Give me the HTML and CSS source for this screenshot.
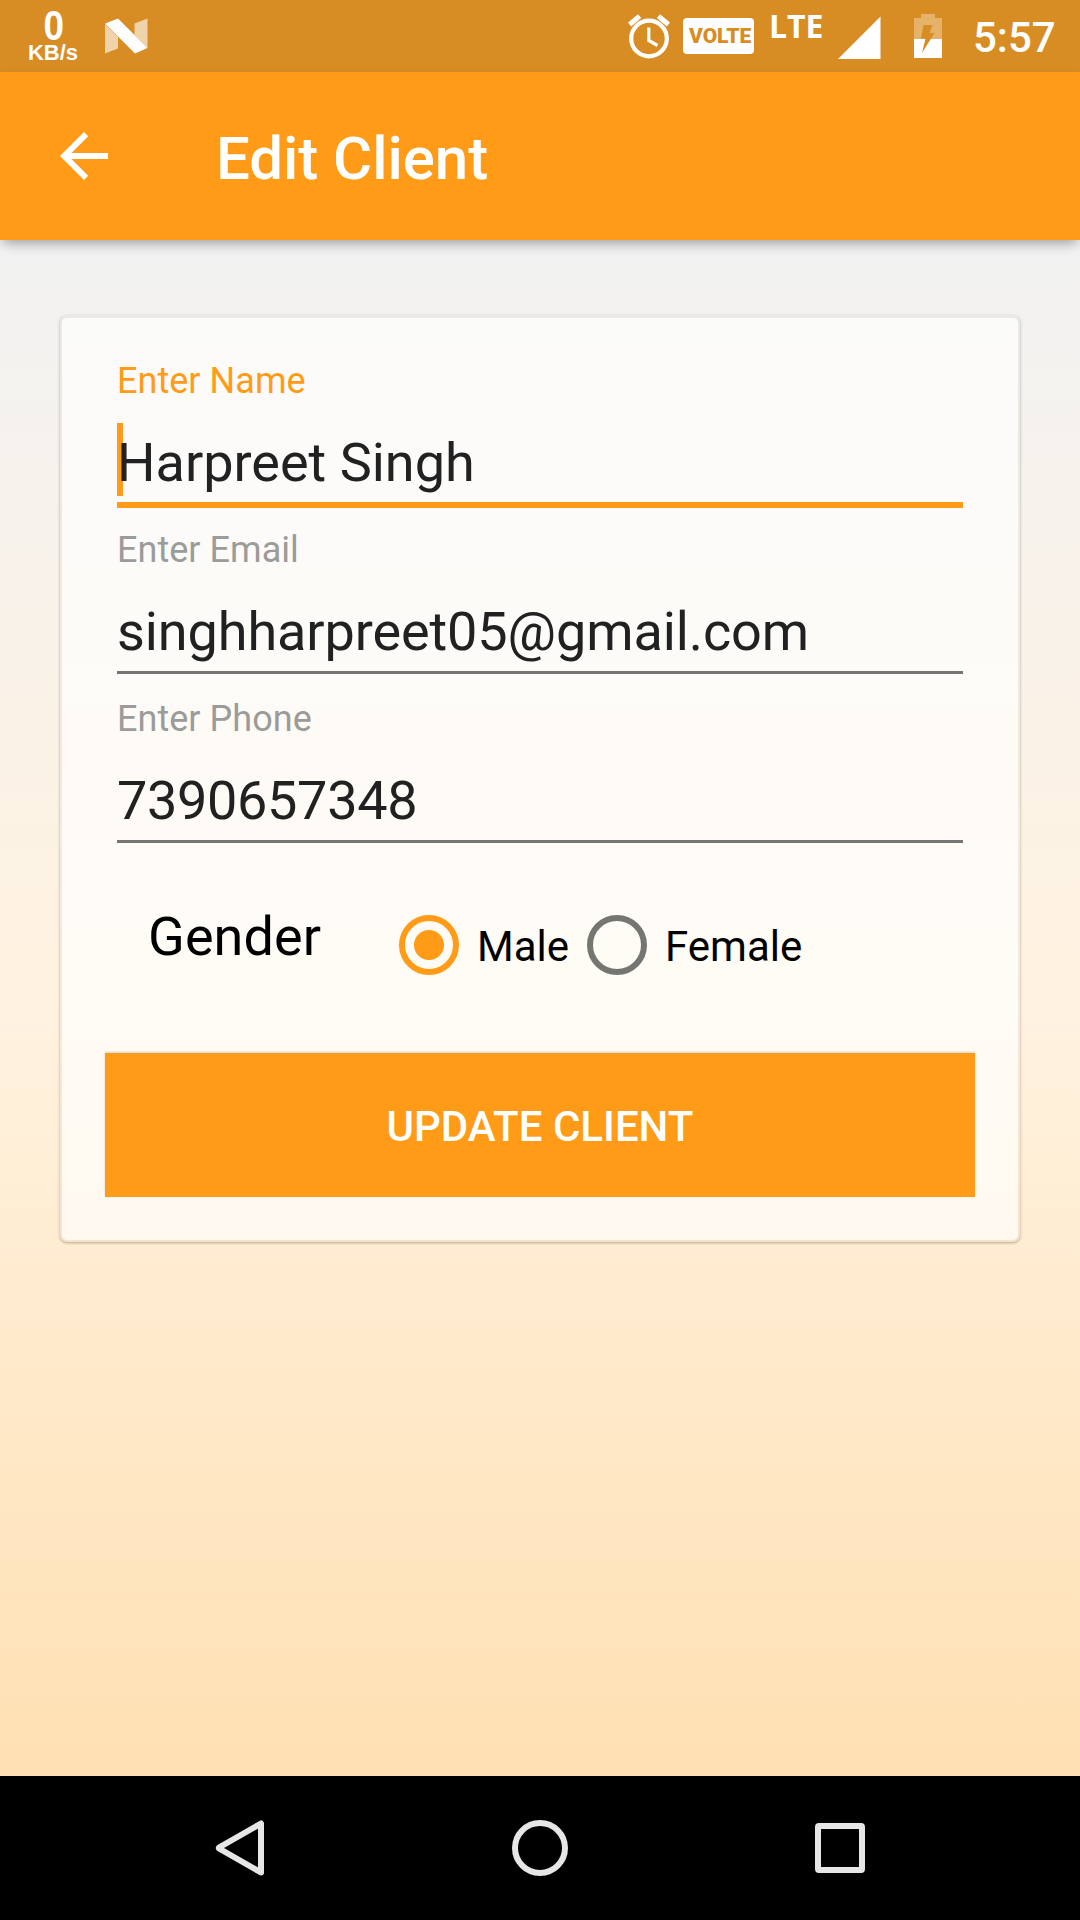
FILE: index.html
```html
<!DOCTYPE html>
<html lang="en">
<head>
<meta charset="utf-8">
<title>Edit Client</title>
<link rel="stylesheet" href="styles.css">
</head>
<body>
<div class="screen">
  <header class="status">
    <div class="speed"><span class="speed-value">0</span><span class="speed-unit">KB/s</span></div>
    <svg class="nougat" width="44" height="36" viewBox="0 0 44 36" fill="#fff">
      <path opacity=".62" d="M0 6 13 19V30.500L0 35.500ZM29.500 5.500 42.500 .500V30L29.500 17Z"/>
      <path d="M0 5.500 13 .500 42.500 30 30 35.500Z"/>
    </svg>
    <div class="status-right">
      <svg class="alarm" width="44" height="46" viewBox="0 0 44 46" fill="none" stroke="#fff">
        <circle cx="21" cy="24.500" r="17.800" stroke-width="4.200"/>
        <path stroke-width="5" d="M1.600 10.500 11.600 2.200M30.400 2.200 40.400 10.500"/>
        <path stroke-width="3.200" d="M20.800 13.500V26.500L29.500 31.500"/>
      </svg>
      <span class="volte">VOLTE</span>
      <span class="lte">LTE</span>
      <svg class="signal" width="43" height="43" viewBox="0 0 43 43"><path fill="#fff" d="M0 43 42.500 .500V43Z"/></svg>
      <svg class="battery" width="28" height="44" viewBox="0 0 28 44">
        <path fill="#e6b168" d="M7 0H21V4H28V25H0V4H7Z"/>
        <path fill="#fff" d="M0 25H28V44H0Z"/>
        <path fill="#d88c24" d="M9.500 11H18.500L15.500 19H20.500L8 39 11.500 24.500H7Z"/>
      </svg>
      <span class="clock">5:57</span>
    </div>
  </header>

  <div class="toolbar">
    <svg width="72" height="72" viewBox="0 0 24 24"><path fill="#fff" d="M20 11H7.830l5.590-5.590L12 4l-8 8 8 8 1.410-1.410L7.830 13H20v-2z"/></svg>
    <h1 class="title">Edit Client</h1>
  </div>

  <main class="content">
    <form class="card">
      <div class="field focused">
        <span class="label">Enter Name</span>
        <div class="value"><i class="caret"></i>Harpreet Singh</div>
      </div>
      <div class="field">
        <span class="label">Enter Email</span>
        <div class="value email">singhharpreet05@gmail.com</div>
      </div>
      <div class="field">
        <span class="label">Enter Phone</span>
        <div class="value phone">7390657348</div>
      </div>
      <div class="gender">
        <span class="gender-label">Gender</span>
        <span class="radio checked"></span><span class="option">Male</span>
        <span class="radio"></span><span class="option">Female</span>
      </div>
      <button class="update" type="button">UPDATE CLIENT</button>
    </form>
  </main>

  <nav class="navbar">
    <svg width="60" height="60" viewBox="0 0 60 60" fill="none" stroke="#e6e6e6" stroke-width="6" stroke-linejoin="round"><path d="M51 5.500V54.500L9 30.500Q8.500 30 9 29.500Z"/></svg>
    <svg width="60" height="60" viewBox="0 0 60 60" fill="none" stroke="#e6e6e6" stroke-width="6"><circle cx="30" cy="30" r="25"/></svg>
    <svg width="60" height="60" viewBox="0 0 60 60" fill="none" stroke="#e6e6e6" stroke-width="6"><rect x="8" y="8" width="44" height="44" rx="1"/></svg>
  </nav>
</div>
</body>
</html>
```
FILE: styles.css
```css
* { box-sizing: border-box; }

body {
  margin: 0;
  font-family: Roboto, "Liberation Sans", sans-serif;
}

svg { display: block; flex: none; }

.screen {
  display: flex;
  flex-direction: column;
  width: 1080px;
  height: 1920px;
  overflow: hidden;
}

.status {
  display: flex;
  align-items: flex-start;
  height: 72px;
  padding-left: 24px;
  background: #d88c24;
  color: #fff;
}

.speed {
  display: flex;
  flex-direction: column;
  align-items: center;
  width: 60px;
  padding-top: 5px;
  font-family: "Liberation Sans", sans-serif;
  font-weight: 700;
}

.speed-value {
  font-size: 42px;
  line-height: 42px;
  transform: scaleX(.88);
}

.speed-unit {
  margin-left: -2px;
  font-size: 22px;
  line-height: 12px;
}

.nougat { margin: 18px 0 0 21px; }

.status-right {
  display: flex;
  align-items: flex-start;
  margin-left: auto;
  padding-right: 25px;
}

.alarm { margin-top: 14px; }

.volte {
  width: 71px;
  height: 36px;
  margin: 18px 0 0 11px;
  padding-left: 6px;
  border-radius: 4px;
  background: #fff;
  color: #d88c24;
  font-size: 21px;
  font-weight: 900;
  line-height: 36px;
  letter-spacing: -.1px;
}

.lte {
  width: 54px;
  margin: 7px 0 0 15px;
  font-family: "Open Sans", sans-serif;
  font-size: 32px;
  font-weight: 700;
  line-height: 37px;
}

.signal { margin: 16px 0 0 15px; }
.battery { margin: 14px 0 0 33px; }

.clock {
  width: 82px;
  margin: 13px 0 0 31px;
  font-size: 42px;
  font-weight: 500;
  line-height: 49px;
}

.toolbar {
  display: flex;
  align-items: center;
  gap: 96px;
  height: 168px;
  padding-left: 48px;
  background: #ff9b17;
  box-shadow: 0 6px 12px -3px rgba(0, 0, 0, .36);
  z-index: 1;
}

.title {
  margin: 0;
  padding-top: 5px;
  color: #fff;
  font-size: 60px;
  font-weight: 500;
  line-height: 72px;
  letter-spacing: -.05px;
}

.content {
  flex: 1;
  padding: 75px 60px 0;
  background: linear-gradient(#f2f2f2, #fff2e0 50%, #ffe0b2);
}

.card {
  display: flex;
  flex-direction: column;
  height: 927px;
  padding: 42px 43px 0;
  border: 2px solid rgba(0, 0, 0, .035);
  border-top-width: 3px;
  border-radius: 7px;
  background: rgba(255, 255, 255, .67);
  background-clip: padding-box;
  box-shadow: 0 1px 3px rgba(0, 0, 0, .3);
}

.field {
  height: 169px;
  margin: 0 12px;
}

.label {
  display: block;
  height: 64px;
  color: #9b9b99;
  font-size: 36px;
  line-height: 42px;
  letter-spacing: .04px;
}

.focused .label { color: #ff9b17; }

.value {
  position: relative;
  height: 81px;
  border-bottom: 3px solid #757573;
  color: #212121;
  font-size: 54px;
  line-height: 77px;
}

.email { letter-spacing: -.1px; }
.phone { letter-spacing: -.33px; }

.focused .value {
  height: 84px;
  border-bottom: 6px solid #ff9b17;
}

.caret {
  position: absolute;
  top: -1px;
  left: 0;
  width: 6px;
  height: 73px;
  background: #ff9b17;
  z-index: -1;
}

.focused .value { z-index: 0; }

.gender {
  display: flex;
  align-items: flex-start;
  height: 186px;
  padding: 48px 0 0 43px;
  color: #000;
}

.gender-label {
  width: 251px;
  margin-top: -10px;
  font-size: 54px;
  line-height: 63px;
  letter-spacing: .1px;
}

.radio {
  flex: none;
  width: 60px;
  height: 60px;
  border: 6px solid #757572;
  border-radius: 50%;
}

.checked {
  border-color: #ff9b17;
  background: radial-gradient(circle, #ff9b17 14.5px, transparent 15.5px);
}

.option {
  width: 111px;
  padding: 7px 0 0 18px;
  margin-right: 17px;
  font-size: 42px;
  line-height: 49px;
}

.update {
  height: 144px;
  margin: 0;
  padding: 2px 0 0;
  border: 0;
  background: #ff9b17;
  color: #fff;
  box-shadow: 0 -1px 2px rgba(0, 0, 0, .16);
  font: 500 42px/49px Roboto, "Liberation Sans", sans-serif;
}

.navbar {
  display: flex;
  align-items: center;
  justify-content: center;
  gap: 240px;
  height: 144px;
  background: #000;
}
```
